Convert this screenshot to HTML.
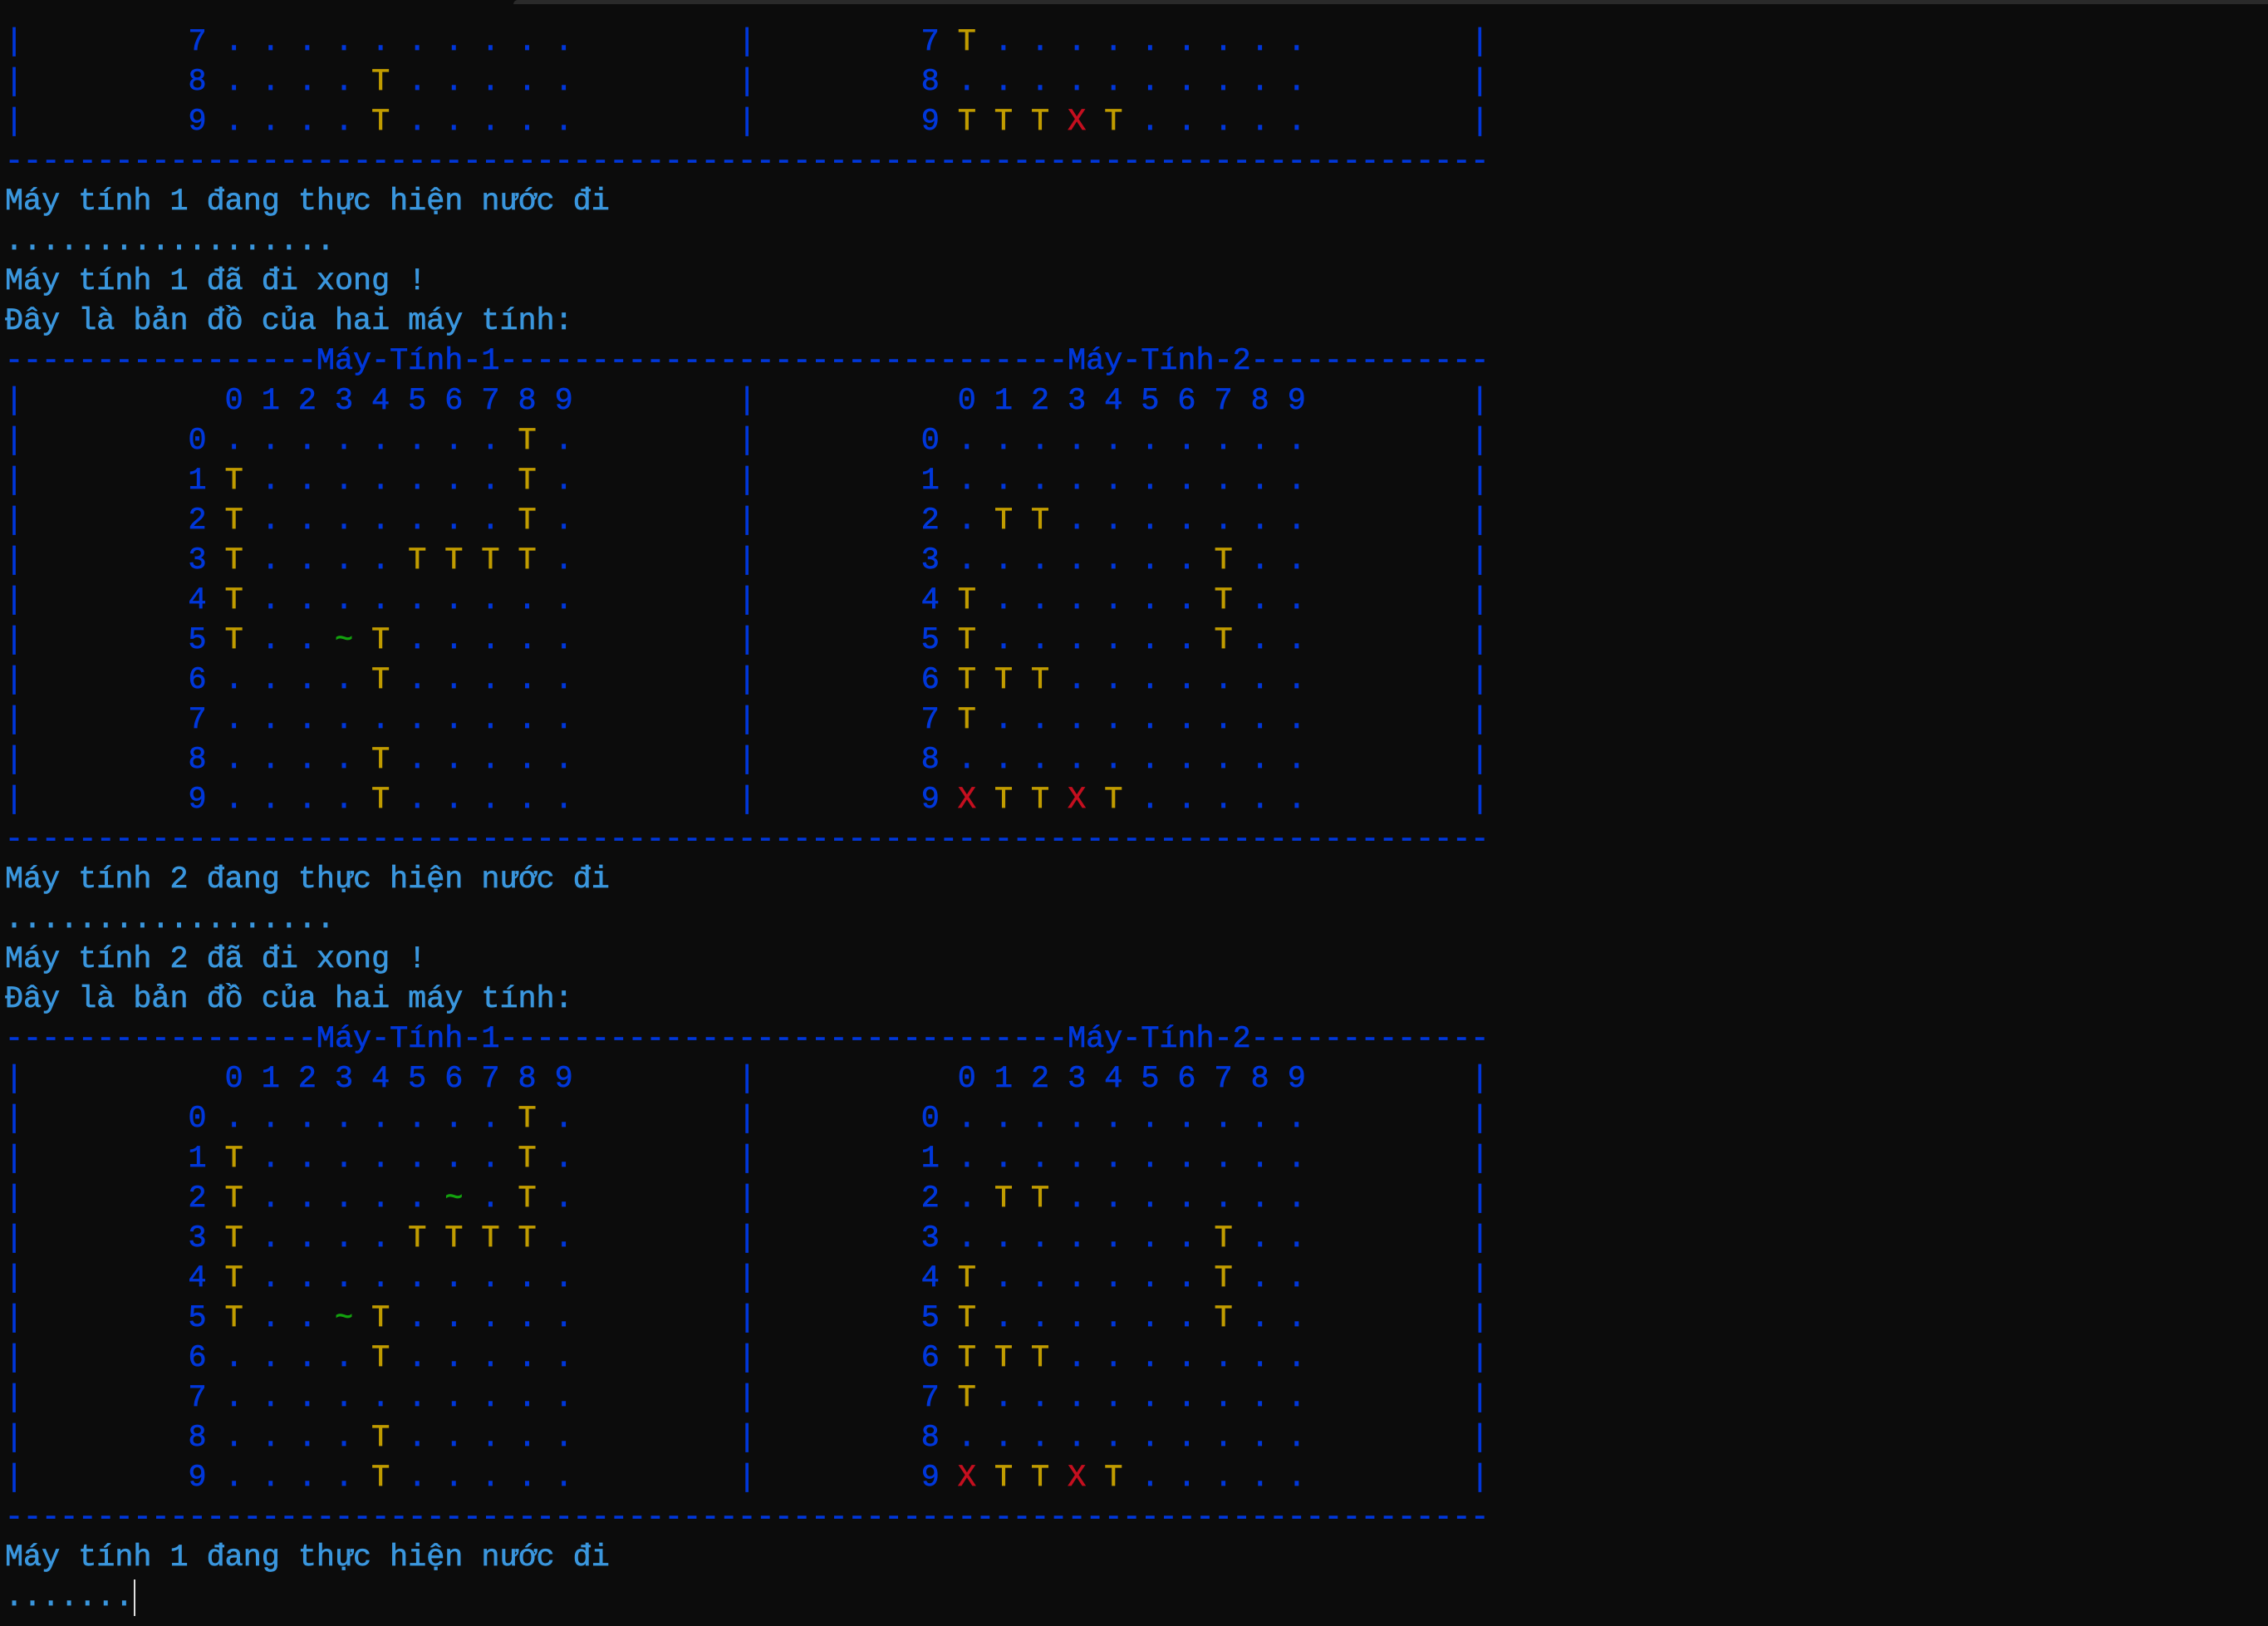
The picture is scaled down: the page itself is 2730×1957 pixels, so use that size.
<!DOCTYPE html>
<html><head><meta charset="utf-8">
<style>
html,body{margin:0;padding:0;background:#0c0c0c;width:2730px;height:1957px;overflow:hidden;}
.bar{position:absolute;left:618px;top:0;width:2112px;height:5px;background:#2a2a2a;border-radius:6px 0 0 0;}
pre{position:absolute;left:6px;top:27px;margin:0;font-family:"Liberation Mono","DejaVu Sans Mono",monospace;font-size:36.75px;line-height:48px;color:#0037da;white-space:pre;-webkit-text-stroke:0.7px currentColor;}
y{color:#c19c00}r{color:#c50f1f}g{color:#13a10e}c{color:#3a96dd}
.cur{position:absolute;left:161px;top:1901px;width:2px;height:44px;background:#e0e0e0;}
</style></head><body>
<div class="bar"></div>
<pre>|         7 . . . . . . . . . .         |         7 <y>T</y> . . . . . . . . .         |
|         8 . . . . <y>T</y> . . . . .         |         8 . . . . . . . . . .         |
|         9 . . . . <y>T</y> . . . . .         |         9 <y>T T T</y> <r>X</r> <y>T</y> . . . . .         |
---------------------------------------------------------------------------------
<c>Máy tính 1 đang thực hiện nước đi</c>
<c>..................</c>
<c>Máy tính 1 đã đi xong !</c>
<c>Đây là bản đồ của hai máy tính:</c>
-----------------Máy-Tính-1-------------------------------Máy-Tính-2-------------
|           0 1 2 3 4 5 6 7 8 9         |           0 1 2 3 4 5 6 7 8 9         |
|         0 . . . . . . . . <y>T</y> .         |         0 . . . . . . . . . .         |
|         1 <y>T</y> . . . . . . . <y>T</y> .         |         1 . . . . . . . . . .         |
|         2 <y>T</y> . . . . . . . <y>T</y> .         |         2 . <y>T T</y> . . . . . . .         |
|         3 <y>T</y> . . . . <y>T T T T</y> .         |         3 . . . . . . . <y>T</y> . .         |
|         4 <y>T</y> . . . . . . . . .         |         4 <y>T</y> . . . . . . <y>T</y> . .         |
|         5 <y>T</y> . . <g>~</g> <y>T</y> . . . . .         |         5 <y>T</y> . . . . . . <y>T</y> . .         |
|         6 . . . . <y>T</y> . . . . .         |         6 <y>T T T</y> . . . . . . .         |
|         7 . . . . . . . . . .         |         7 <y>T</y> . . . . . . . . .         |
|         8 . . . . <y>T</y> . . . . .         |         8 . . . . . . . . . .         |
|         9 . . . . <y>T</y> . . . . .         |         9 <r>X</r> <y>T T</y> <r>X</r> <y>T</y> . . . . .         |
---------------------------------------------------------------------------------
<c>Máy tính 2 đang thực hiện nước đi</c>
<c>..................</c>
<c>Máy tính 2 đã đi xong !</c>
<c>Đây là bản đồ của hai máy tính:</c>
-----------------Máy-Tính-1-------------------------------Máy-Tính-2-------------
|           0 1 2 3 4 5 6 7 8 9         |           0 1 2 3 4 5 6 7 8 9         |
|         0 . . . . . . . . <y>T</y> .         |         0 . . . . . . . . . .         |
|         1 <y>T</y> . . . . . . . <y>T</y> .         |         1 . . . . . . . . . .         |
|         2 <y>T</y> . . . . . <g>~</g> . <y>T</y> .         |         2 . <y>T T</y> . . . . . . .         |
|         3 <y>T</y> . . . . <y>T T T T</y> .         |         3 . . . . . . . <y>T</y> . .         |
|         4 <y>T</y> . . . . . . . . .         |         4 <y>T</y> . . . . . . <y>T</y> . .         |
|         5 <y>T</y> . . <g>~</g> <y>T</y> . . . . .         |         5 <y>T</y> . . . . . . <y>T</y> . .         |
|         6 . . . . <y>T</y> . . . . .         |         6 <y>T T T</y> . . . . . . .         |
|         7 . . . . . . . . . .         |         7 <y>T</y> . . . . . . . . .         |
|         8 . . . . <y>T</y> . . . . .         |         8 . . . . . . . . . .         |
|         9 . . . . <y>T</y> . . . . .         |         9 <r>X</r> <y>T T</y> <r>X</r> <y>T</y> . . . . .         |
---------------------------------------------------------------------------------
<c>Máy tính 1 đang thực hiện nước đi</c>
<c>.......</c></pre>
<div class="cur"></div>
</body></html>
